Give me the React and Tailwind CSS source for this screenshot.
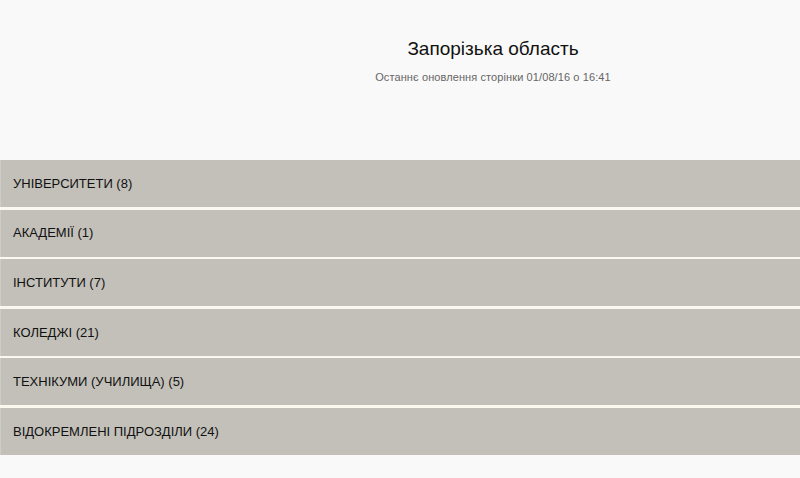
const groups = [
  'УНІВЕРСИТЕТИ (8)',
  'АКАДЕМІЇ (1)',
  'ІНСТИТУТИ (7)',
  'КОЛЕДЖІ (21)',
  'ТЕХНІКУМИ (УЧИЛИЩА) (5)',
  'ВІДОКРЕМЛЕНІ ПІДРОЗДІЛИ (24)',
];

export default function App() {
  return (
    <div className="min-h-[478px] bg-[#f9f9f9] font-['Liberation_Sans',Arial,sans-serif] text-[#111]">
      {/* Заголовок */}
      <div className="ml-[186px] flex h-[160px] flex-col items-center pt-[38px]">
        <h1 className="text-[19px] leading-[22px]">Запорізька область</h1>
        <p className="mt-[10px] text-[11px] leading-[14px] tracking-[0.1px] text-[#666]">
          Останнє оновлення сторінки 01/08/16 о 16:41
        </p>
      </div>

      {/* Список груп */}
      <div className="flex flex-col gap-[2.6px] bg-[#fbf8f0]">
        {groups.map((g) => (
          <div
            key={g}
            className="flex h-[47px] items-center border-l border-[#cfccc6] bg-[#c3c0b9] pl-[12px] text-[13px]"
          >
            {g}
          </div>
        ))}
      </div>
    </div>
  );
}
